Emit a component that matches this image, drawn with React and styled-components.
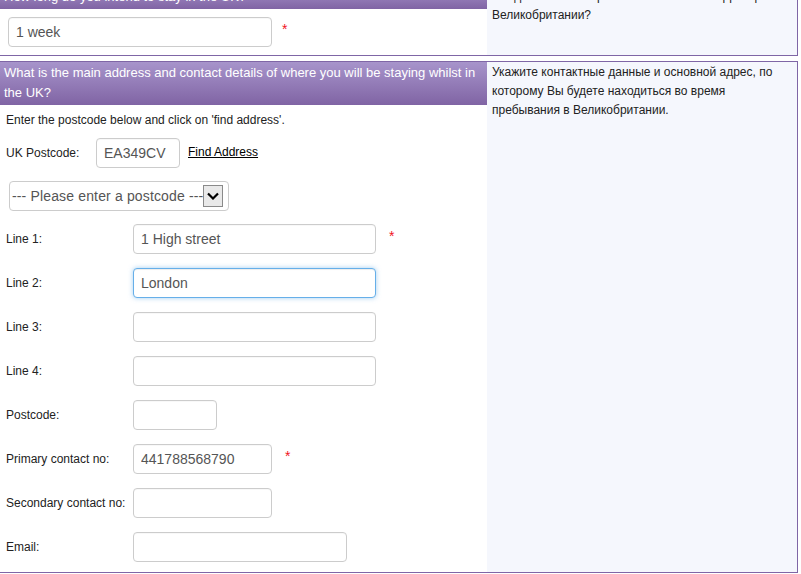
import React from "react";
import styled, { createGlobalStyle } from "styled-components";

const Global = createGlobalStyle`
  html, body { margin: 0; padding: 0; background: #fff; }
  body { font-family: "Liberation Sans", Arial, sans-serif; color: #333; overflow: hidden; }
  * { box-sizing: border-box; }
`;

const Page = styled.div`
  width: 799px;
  margin: -15px 0 0 -1px;
`;

const Section = styled.section`
  display: flex;
  border: 1px solid #7f66a6;
  & + & { margin-top: 5px; }
`;

const Main = styled.div`
  width: 487px;
  flex: none;
  display: flex;
  flex-direction: column;
  background: #fff;
`;

const Help = styled.div`
  flex: 1;
  background: #f5f7fd;
  padding: 1px 6px 0 5px;
  font-size: 12px;
  line-height: 1.6;
  color: #222;
`;

const Header = styled.div`
  background: linear-gradient(#a794cb, #8064a4);
  color: #fff;
  font-size: 13px;
  line-height: 20px;
  padding: 1px 6px 2px 4px;
`;

const Body = styled.div`
  display: flex;
  flex-direction: column;
  padding: ${(p) => p.$pad};
`;

const Row = styled.div`
  display: flex;
  align-items: ${(p) => (p.$top ? "flex-start" : "center")};
  margin-top: ${(p) => p.$mt || 0}px;
`;

const Intro = styled.p`
  margin: 7px 0 0 6px;
  font-size: 12px;
  line-height: 16px;
  color: #222;
`;

const Label = styled.label`
  width: ${(p) => p.$w}px;
  flex: none;
  font-size: 12px;
  color: #222;
`;

const PostcodeLabel = styled(Label)`
  padding-left: 6px;
`;

const Input = styled.input`
  width: ${(p) => p.$w}px;
  height: 30px;
  flex: none;
  border: 1px solid ${(p) => (p.$focused ? "#66afe9" : "#cccccc")};
  border-radius: 4px;
  padding: 0 7px;
  font-family: "Liberation Sans", Arial, sans-serif;
  font-size: 14px;
  color: #555;
  background: #fff;
  outline: none;
  box-shadow: ${(p) =>
    p.$focused
      ? "inset 0 1px 1px rgba(0,0,0,.075), 0 0 5px rgba(102,175,233,.6)"
      : "inset 0 1px 1px rgba(0,0,0,.03)"};
`;

const Star = styled.span`
  align-self: flex-start;
  color: #f0141e;
  font-size: 14px;
  line-height: 14px;
  margin: 5px 0 0 ${(p) => p.$ml || 13}px;
`;

const FindLink = styled.a`
  margin-left: 8px;
  font-size: 12px;
  color: #000;
  text-decoration: underline;
  cursor: pointer;
  align-self: flex-start;
  margin-top: 7px;
`;

const Select = styled.div`
  width: 220px;
  height: 30px;
  margin-left: 9px;
  border: 1px solid #cccccc;
  border-radius: 4px;
  display: flex;
  align-items: center;
  padding-left: 2px;
  font-size: 14px;
  color: #555;
  white-space: nowrap;
`;

const SelectText = styled.span`
  overflow: hidden;
  width: 191px;
  flex: none;
  letter-spacing: 0.15px;
`;

const SelectButton = styled.span`
  width: 20px;
  height: 22px;
  flex: none;
  border: 1px solid #8a8a8a;
  background: #e9e9e9;
  display: flex;
  align-items: center;
  justify-content: center;
`;

const Fields = styled.div`
  display: flex;
  flex-direction: column;
  gap: 14px;
  margin-top: 13px;
`;

const FieldRow = styled.div`
  display: flex;
  align-items: center;
  padding-left: 6px;
`;

const fields = [
  { label: "Line 1:", w: 243, value: "1 High street", req: true },
  { label: "Line 2:", w: 243, value: "London", focused: true },
  { label: "Line 3:", w: 243, value: "" },
  { label: "Line 4:", w: 243, value: "" },
  { label: "Postcode:", w: 84, value: "" },
  { label: "Primary contact no:", w: 139, value: "441788568790", req: true },
  { label: "Secondary contact no:", w: 139, value: "" },
  { label: "Email:", w: 214, value: "" },
];

function Field({ label, w, value, req, focused }) {
  return (
    <FieldRow>
      <Label $w={127}>{label}</Label>
      <Input $w={w} $focused={focused} defaultValue={value} />
      {req && <Star>*</Star>}
    </FieldRow>
  );
}

export default function App() {
  return (
    <>
      <Global />
      <Page>
        <Section>
          <Main>
            <Header>How long do you intend to stay in the UK?</Header>
            <Body $pad="8px 0 8px 8px">
              <Row $top>
                <Input $w={264} defaultValue="1 week" />
                <Star $ml={10}>*</Star>
              </Row>
            </Body>
          </Main>
          <Help>Как долго Вы намерены оставаться на территории Великобритании?</Help>
        </Section>
        <Section>
          <Main>
            <Header>
              What is the main address and contact details of where you will be staying whilst in the UK?
            </Header>
            <Body $pad="0 0 10px 0">
              <Intro>Enter the postcode below and click on 'find address'.</Intro>
              <Row $mt={10}>
                <PostcodeLabel $w={96}>UK Postcode:</PostcodeLabel>
                <Input $w={84} defaultValue="EA349CV" />
                <FindLink>Find Address</FindLink>
              </Row>
              <Row $mt={13}>
                <Select>
                  <SelectText>--- Please enter a postcode ---</SelectText>
                  <SelectButton>
                    <svg width="12" height="8" viewBox="0 0 12 8">
                      <path d="M1 1.5 L6 6.5 L11 1.5" fill="none" stroke="#000" strokeWidth="2.2" />
                    </svg>
                  </SelectButton>
                </Select>
              </Row>
              <Fields>
                {fields.map((f) => (
                  <Field key={f.label} {...f} />
                ))}
              </Fields>
            </Body>
          </Main>
          <Help>
            Укажите контактные данные и основной адрес, по которому Вы будете находиться во время пребывания в Великобритании.
          </Help>
        </Section>
      </Page>
    </>
  );
}
